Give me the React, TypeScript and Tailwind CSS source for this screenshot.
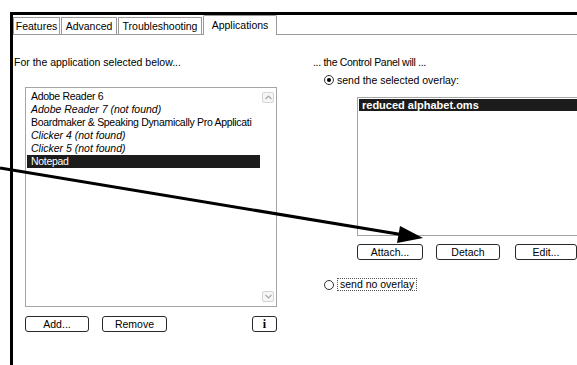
import React from 'react'

const apps = [
  { name: 'Adobe Reader 6', missing: false },
  { name: 'Adobe Reader 7 (not found)', missing: true },
  { name: 'Boardmaker & Speaking Dynamically Pro Applicati', missing: false },
  { name: 'Clicker 4 (not found)', missing: true },
  { name: 'Clicker 5 (not found)', missing: true },
  { name: 'Notepad', missing: false, selected: true },
]

const Btn = ({ label, w, className = '' }: { label: string; w: string; className?: string }) => (
  <div
    className={`${w} ${className} h-[16px] shrink-0 border border-[#2a2a2a] rounded-[3px] bg-white flex items-center justify-center leading-none`}
  >
    {label}
  </div>
)

const Radio = ({ checked }: { checked?: boolean }) => (
  <div className="w-[10px] h-[10px] rounded-full border border-[#333] bg-white flex items-center justify-center shrink-0">
    {checked && <div className="w-[4px] h-[4px] rounded-full bg-black" />}
  </div>
)

const Chevron = ({ up }: { up?: boolean }) => (
  <div className="w-[12px] h-[11px] border border-[#d4d4d4] rounded-[2px] bg-[#f6f6f6] flex items-center justify-center">
    <svg width="7" height="5" viewBox="0 0 7 5">
      <path d={up ? 'M0.5 4 L3.5 1 L6.5 4' : 'M0.5 1 L3.5 4 L6.5 1'} fill="none" stroke="#a8a8a8" strokeWidth="1.2" />
    </svg>
  </div>
)

const Tab = ({ label, w, active }: { label: string; w: string; active?: boolean }) => (
  <div
    className={
      active
        ? `${w} h-[20px] -mb-px bg-white border border-b-0 border-[#9a9a9a] rounded-t-[2px] flex items-start justify-center pt-[3px] leading-[12px]`
        : `${w} h-[17px] border border-b-0 border-[#9a9a9a] flex items-center justify-center leading-[12px]`
    }
  >
    {label}
  </div>
)

export default function App() {
  return (
    <div className="relative w-[577px] h-[365px] bg-white overflow-hidden text-black text-[10.5px] font-['Liberation_Sans',Arial,sans-serif]">
      <div className="ml-[10px] mt-[12px] h-[353px] border-l-[3px] border-t-[3px] border-black">
        {/* tabs */}
        <div className="flex items-end gap-px h-[20px] border-b border-[#9a9a9a]">
          <Tab label="Features" w="w-[47px]" />
          <Tab label="Advanced" w="w-[56px]" />
          <Tab label="Troubleshooting" w="w-[84px]" />
          <Tab label="Applications" w="w-[74px]" active />
        </div>

        <div className="flex">
          {/* left column */}
          <div className="w-[264px] shrink-0">
            <div className="mt-[21px] pl-[1px] h-[12px] leading-[12px]">For the application selected below...</div>
            <div className="mt-[19px] ml-[12px] w-[252px] h-[220px] border border-[#a5a5a5] flex">
              <div className="flex-1 min-w-0 pt-[2px] pl-[1px]">
                {apps.map((a) => (
                  <div
                    key={a.name}
                    className={`h-[13px] leading-[13px] pl-[4px] whitespace-nowrap overflow-hidden ${
                      a.selected ? 'bg-[#1c1c1c] text-white' : ''
                    } ${a.missing ? 'italic' : 'tracking-[-0.3px]'}`}
                  >
                    {a.name}
                  </div>
                ))}
              </div>
              <div className="w-[16px] shrink-0 flex flex-col justify-between items-center py-[4px]">
                <Chevron up />
                <Chevron />
              </div>
            </div>
            <div className="mt-[9px] ml-[12px] flex items-center">
              <Btn label="Add..." w="w-[64px]" />
              <Btn label="Remove" w="w-[65px]" className="ml-[13px]" />
              <div className="ml-auto w-[25px] h-[16px] border border-[#2a2a2a] rounded-[3px] flex items-center justify-center font-['Liberation_Serif',serif] font-bold text-[12px] leading-none">
                i
              </div>
            </div>
          </div>

          {/* right column */}
          <div className="flex-1 min-w-0">
            <div className="mt-[21px] ml-[36px] h-[12px] leading-[12px] whitespace-nowrap tracking-[-0.3px]">... the Control Panel will ...</div>
            <div className="mt-[6px] ml-[47px] h-[12px] flex items-center gap-[3px] whitespace-nowrap">
              <Radio checked />
              <span className="leading-[12px]">send the selected overlay:</span>
            </div>
            <div className="mt-[11px] ml-[80px] w-[240px] h-[139px] border border-[#a5a5a5] pt-[1px] pl-[1px]">
              <div className="h-[12px] leading-[12px] bg-[#1c1c1c] text-white font-bold pl-[3px] whitespace-nowrap text-[11px]">
                reduced alphabet.oms
              </div>
            </div>
            <div className="mt-[8px] ml-[80px] flex items-center">
              <Btn label="Attach..." w="w-[66px]" />
              <Btn label="Detach" w="w-[64px]" className="ml-[13px]" />
              <Btn label="Edit..." w="w-[62px]" className="ml-[15px]" />
            </div>
            <div className="mt-[18px] ml-[47px] h-[13px] flex items-center whitespace-nowrap">
              <Radio />
              <span className="ml-[3px] px-[2px] h-[13px] leading-[11px] border border-dotted border-[#555]">send no overlay</span>
            </div>
          </div>
        </div>
      </div>

      {/* callout arrow */}
      <svg className="absolute inset-0 pointer-events-none" width="577" height="365" viewBox="0 0 577 365">
        <path d="M0 168 L404 235" stroke="black" strokeWidth="3" fill="none" />
        <path d="M423 238 L400 226 L397 243 Z" fill="black" />
      </svg>
    </div>
  )
}
